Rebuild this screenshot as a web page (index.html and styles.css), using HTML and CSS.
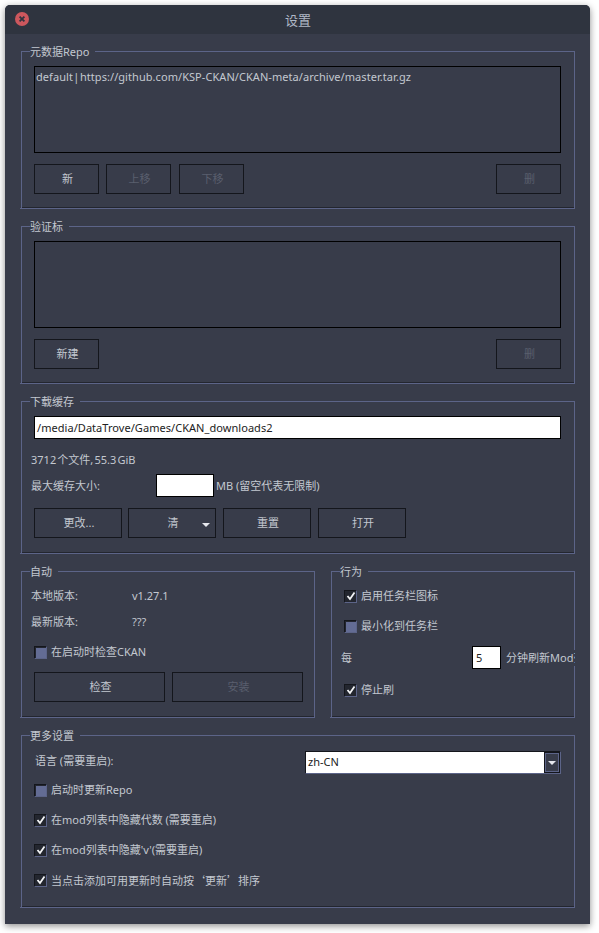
FILE: index.html
```html
<!DOCTYPE html>
<html lang="zh-CN">
<head>
<meta charset="utf-8">
<title>设置</title>
<link rel="stylesheet" href="styles.css">
</head>
<body>
<div class="window">
  <header class="titlebar">
    <span class="close"><svg viewBox="0 0 14 14" width="14" height="14"><circle cx="7" cy="7" r="7" fill="#cc575d"/><path d="M4.6 4.6l4.8 4.8M9.4 4.6l-4.8 4.8" stroke="#2f343f" stroke-width="1.8"/></svg></span>
    <span class="title">设置</span>
  </header>
  <main class="content">
    <section class="group repo">
      <span class="legend">元数据Repo</span>
      <div class="listbox"><span class="listitem">default | https://github.com/KSP-CKAN/CKAN-meta/archive/master.tar.gz</span></div>
      <div class="btnrow">
        <button class="btn w65">新</button>
        <button class="btn w65 off">上移</button>
        <button class="btn w65 off third">下移</button>
        <button class="btn w65 off end">删</button>
      </div>
    </section>
    <section class="group repo">
      <span class="legend">验证标</span>
      <div class="listbox"></div>
      <div class="btnrow">
        <button class="btn w65">新建</button>
        <button class="btn w65 off end">删</button>
      </div>
    </section>
    <section class="group cache">
      <span class="legend">下载缓存</span>
      <div class="path">/media/DataTrove/Games/CKAN_downloads2</div>
      <div class="stat">3712 个文件, 55.3 GiB</div>
      <div class="sizerow">
        <span class="sizelabel">最大缓存大小:</span>
        <span class="field sizefield"></span>
        <span class="sizehint">MB (留空代表无限制)</span>
      </div>
      <div class="btnrow cachebtns">
        <button class="btn w88">更改...</button>
        <button class="btn w88 split"><span>清</span><i class="arrow"></i></button>
        <button class="btn w88 third">重置</button>
        <button class="btn w88 third">打开</button>
      </div>
    </section>
    <div class="pair">
      <section class="group auto">
        <span class="legend">自动</span>
        <div class="kv"><span class="key">本地版本:</span><span>v1.27.1</span></div>
        <div class="kv second"><span class="key">最新版本:</span><span>???</span></div>
        <label class="check checkauto"><span class="box"></span>在启动时检查CKAN</label>
        <div class="btnrow autobtns">
          <button class="btn w131">检查</button>
          <button class="btn w131 off">安装</button>
        </div>
      </section>
      <section class="group behave">
        <span class="legend">行为</span>
        <label class="check c1"><span class="box on"><svg viewBox="0 0 10 10" width="10" height="10"><path d="M1.5 5l2.5 3L8.5 1.5" fill="none" stroke="#f2f3f5" stroke-width="1.8"/></svg></span>启用任务栏图标</label>
        <label class="check c2"><span class="box"></span>最小化到任务栏</label>
        <div class="every">
          <span class="everylabel">每</span>
          <span class="field minfield">5</span>
          <span class="minlabel">分钟刷新Mod列表</span>
        </div>
        <label class="check c3"><span class="box on"><svg viewBox="0 0 10 10" width="10" height="10"><path d="M1.5 5l2.5 3L8.5 1.5" fill="none" stroke="#f2f3f5" stroke-width="1.8"/></svg></span>停止刷</label>
      </section>
    </div>
    <section class="group more">
      <span class="legend">更多设置</span>
      <div class="langrow">
        <span class="langlabel">语言 (需要重启):</span>
        <div class="combo"><span class="combotext">zh-CN</span><span class="combobtn"><span class="comboface"><i class="arrow"></i></span></span></div>
      </div>
      <label class="check m"><span class="box"></span>启动时更新Repo</label>
      <label class="check m"><span class="box on"><svg viewBox="0 0 10 10" width="10" height="10"><path d="M1.5 5l2.5 3L8.5 1.5" fill="none" stroke="#f2f3f5" stroke-width="1.8"/></svg></span>在mod列表中隐藏代数 (需要重启)</label>
      <label class="check m"><span class="box on"><svg viewBox="0 0 10 10" width="10" height="10"><path d="M1.5 5l2.5 3L8.5 1.5" fill="none" stroke="#f2f3f5" stroke-width="1.8"/></svg></span>在mod列表中隐藏'v'(需要重启)</label>
      <label class="check m"><span class="box on"><svg viewBox="0 0 10 10" width="10" height="10"><path d="M1.5 5l2.5 3L8.5 1.5" fill="none" stroke="#f2f3f5" stroke-width="1.8"/></svg></span><span>当点击添加可用更新时自动按<span class="cjk">‘更新’</span>排序</span></label>
    </section>
  </main>
</div>
</body>
</html>
```
FILE: styles.css
```css
* { box-sizing: border-box; }
html, body { margin: 0; padding: 0; background: #fff; }
body {
  width: 599px; height: 933px; overflow: hidden; padding: 5px 9px 9px 5px;
  font: 11px/16px "Noto Sans", "Noto Sans CJK SC", sans-serif; color: #c3c8d0;
}
.cjk { font-family: "Noto Sans CJK SC", sans-serif; }
.window {
  width: 585px; height: 919px; background: #383c4a; border-radius: 5px 5px 0 0;
  box-shadow: 0 2px 7px rgba(0,0,0,.45);
}
.titlebar {
  height: 29px; background: #2f343f; border-radius: 5px 5px 0 0; display: flex; align-items: center;
  padding: 0 0 2px 10px; position: relative;
}
.close { display: flex; }
.title { position: absolute; left: 280px; top: 7px; color: #afb8c6; font-size: 13px; }
.content { padding: 17px 15px 0; display: flex; flex-direction: column; gap: 17px; }
.group { border-bottom: 1px solid #5c6488; position: relative; padding: 1px 14px 0; }
.group::before { content: ""; position: absolute; inset: 0 0 0 1px; border: 1px solid #5c6488; border-bottom: 0; pointer-events: none; }
.group::after { content: ""; position: absolute; left: 2px; right: 1px; bottom: 0; height: 1px; background: #23262f; }
.legend { position: absolute; z-index: 1; top: -7px; left: 10px; padding: 0 6px 0 0; background: #383c4a; white-space: nowrap; }
.repo { height: 158px; padding-top: 15px; }
.listbox { height: 87px; border: 1px solid #000; padding: 2px 1px; }
.listitem { letter-spacing: .06px; word-spacing: -2.5px; }
.btnrow { display: flex; gap: 7px; margin-top: 11px; }
.btn {
  flex: none; height: 30px; padding: 0 0 0 2px; background: #383c4a; border: 1px solid #14161c; color: #c3c8d0;
  font: inherit; display: flex; align-items: center; justify-content: center;
}
.w65 { width: 65px; }
.third { margin-left: 1px; }
.end { margin-left: auto; }
.w88 { width: 88px; }
.w131 { width: 131px; }
.off { color: #5a5f6e; }
.split { position: relative; }
.arrow { display: block; width: 0; height: 0; border: 4px solid transparent; border-top-color: #e6e8ee; border-bottom: 0; }
.split .arrow { position: absolute; right: 5px; top: 14px; }
.cache { height: 153px; padding-top: 15px; }
.path { height: 23px; background: #fff; border: 1px solid #000; color: #222; padding: 3px 2px; letter-spacing: .05px; }
.stat { margin-top: 13px; margin-left: -3px; word-spacing: -1.7px; }
.sizerow { display: flex; align-items: center; margin-top: 6px; margin-left: -3px; }
.sizelabel { width: 125px; }
.field { display: block; background: #fff; border: 1px solid #000; height: 23px; color: #222; }
.sizefield { width: 58px; }
.sizehint { margin-left: 2px; }
.cachebtns { margin-top: 11px; gap: 6px; }
.pair { display: flex; gap: 15px; }
.auto { width: 295px; height: 147px; padding-top: 17px; }
.behave { width: 245px; height: 147px; padding-top: 17px; }
.kv { display: flex; margin-left: -3px; }
.kv.second { margin-top: 10px; }
.key { width: 101px; }
.check { display: flex; align-items: center; gap: 4px; height: 16px; }
.box { width: 13px; height: 13px; flex: none; background: #636c94; border: 1px solid; border-color: #14161c #5c6488 #5c6488 #14161c; box-shadow: inset 1px 1px 0 #23262f; display: flex; align-items: center; justify-content: center; }
.box.on { background: #23262f; }
.box svg { flex: none; }
.checkauto { margin-top: 14px; }
.autobtns { margin-top: 12px; }
.c2 { margin-top: 14px; }
.every { display: flex; align-items: center; margin: 12px -14px 0 -3px; }
.everylabel { width: 131px; }
.minfield { width: 29px; padding: 3px 3px; }
.minlabel { width: 69px; margin-left: 5px; overflow: hidden; white-space: nowrap; background: #383c4a; position: relative; z-index: 1; }
.c3 { margin-top: 13px; }
.more { height: 173px; padding-top: 16px; }
.langrow { display: flex; align-items: center; justify-content: space-between; height: 23px; }
.langlabel { margin: 0 0 3px 1px; }
.combo { width: 256px; height: 23px; display: flex; background: #fff; border: 1px solid; border-color: #14161c #5c6488 #5c6488 #14161c; }
.combotext { flex: 1; color: #222; padding: 2px; }
.combobtn { width: 16px; background: #14161c; padding: 1px; display: flex; }
.comboface { flex: 1; background: #383c4a; border: 1px solid #5c6488; display: flex; align-items: center; justify-content: center; }
.m { margin-top: 14px; }
.langrow + .m { margin-top: 8px; }
```
